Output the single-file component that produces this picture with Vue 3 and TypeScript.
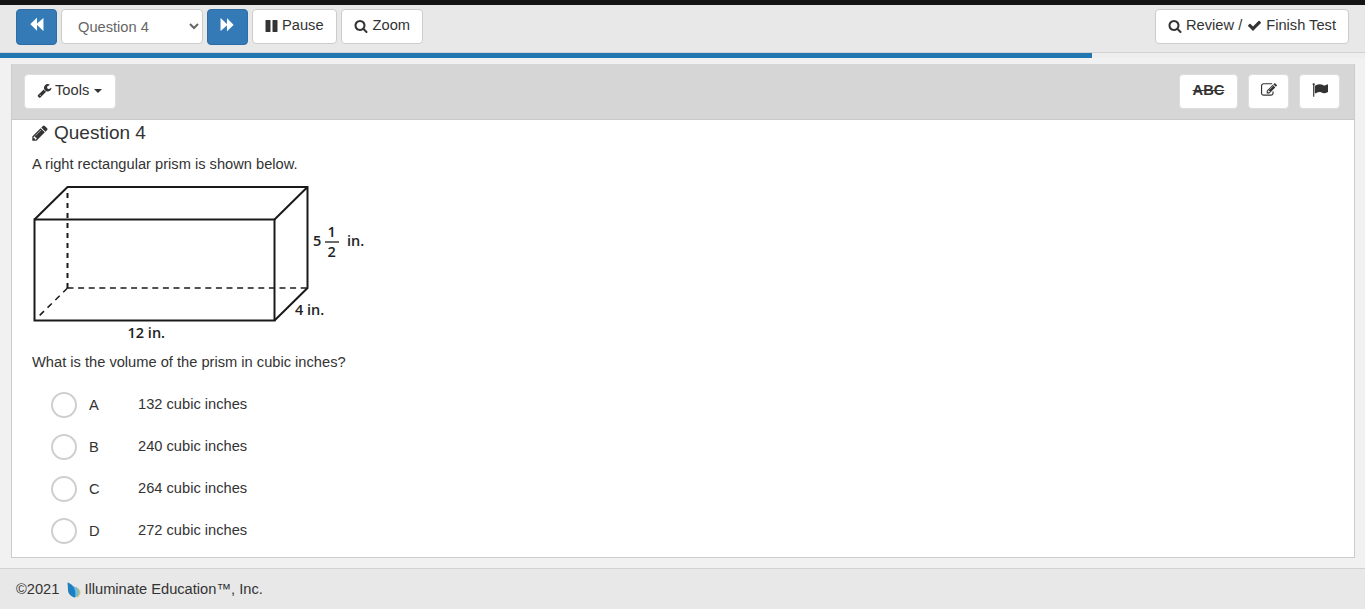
<script setup lang="ts">
const choices = [
  { letter: 'A', text: '132 cubic inches' },
  { letter: 'B', text: '240 cubic inches' },
  { letter: 'C', text: '264 cubic inches' },
  { letter: 'D', text: '272 cubic inches' },
]
const icons: Record<string, string> = {
  search: 'M1216 832q0-185-131.500-316.500t-316.500-131.500-316.500 131.500-131.500 316.500 131.500 316.500 316.500 131.500 316.500-131.500 131.500-316.500zm512 832q0 52-37.500 90t-90.500 38q-54 0-90-38l-343-342q-179 124-399 124-143 0-273.500-55.500t-225-150-150-225-55.500-273.500 55.500-273.500 150-225 225-150 273.500-55.500 273.500 55.500 225 150 150 225 55.500 273.500q0 220-124 399l343 343q37 37 37 90z',
  check: 'M1671 566q0 40-28 68l-724 724-136 136q-28 28-68 28t-68-28l-136-136-362-362q-28-28-28-68t28-68l136-136q28-28 68-28t68 28l294 295 656-657q28-28 68-28t68 28l136 136q28 28 28 68z',
  pause: 'M1664 192v1408q0 26-19 45t-45 19h-512q-26 0-45-19t-19-45v-1408q0-26 19-45t45-19h512q26 0 45 19t19 45zm-896 0v1408q0 26-19 45t-45 19h-512q-26 0-45-19t-19-45v-1408q0-26 19-45t45-19h512q26 0 45 19t19 45z',
  backward: 'M1683 141q19-19 32-13t13 32v1472q0 26-13 32t-32-13l-710-710q-9-9-13-19v678q0 26-13 32t-32-13l-710-710q-19-19-19-45t19-45l710-710q19-19 32-13t13 32v678q4-10 13-19z',
  forward: 'M109 1651q-19 19-32 13t-13-32v-1472q0-26 13-32t32 13l710 710q9 9 13 19v-678q0-26 13-32t32 13l710 710q19 19 19 45t-19 45l-710 710q-19 19-32 13t-13-32v-678q-4 10-13 19z',
  pencil: 'M491 1536l91-91-235-235-91 91v107h128v128h107zm523-928q0-22-22-22-10 0-17 7l-542 542q-7 7-7 17 0 22 22 22 10 0 17-7l542-542q7-7 7-17zm-54-192l416 416-832 832h-416v-416zm683 96q0 53-37 90l-166 166-416-416 166-165q36-38 90-38 53 0 91 38l235 234q37 39 37 91z',
  wrench: 'M448 1472q0-26-19-45t-45-19-45 19-19 45 19 45 45 19 45-19 19-45zm644-420l-682 682q-37 37-90 37-52 0-91-37l-106-108q-38-36-38-90 0-53 38-91l681-681q39 98 114.500 173.500t173.500 114.500zm634-435q0 39-23 106-47 134-164.500 217.500t-258.500 83.500q-185 0-316.500-131.500t-131.500-316.500 131.500-316.500 316.500-131.500q58 0 121.500 16.500t107.500 46.500q16 11 16 28t-16 28l-293 169v224l193 107q5-3 79-48.500t135.500-81 70.500-35.500q15 0 23.500 10t8.500 25z',
  edit: 'M888 1184l116-116-152-152-116 116v56h96v96h56zm440-720q-16-16-33 1l-350 350q-17 17-1 33t33-1l350-350q17-17 1-33zm80 594v190q0 119-84.500 203.500t-203.500 84.500h-832q-119 0-203.500-84.500t-84.500-203.500v-832q0-119 84.500-203.500t203.500-84.500h832q63 0 117 25 15 7 18 23 3 17-9 29l-49 49q-14 14-32 8-23-6-45-6h-832q-66 0-113 47t-47 113v832q0 66 47 113t113 47h832q66 0 113-47t47-113v-126q0-13 9-22l64-64q15-15 35-7t20 29zm-96-738l288 288-672 672h-288v-288zm444 132l-92 92-288-288 92-92q28-28 68-28t68 28l152 152q28 28 28 68t-28 68z',
  flag: 'M320 256q0 72-64 110v1266q0 13-9.500 22.500t-22.500 9.500h-64q-13 0-22.500-9.500t-9.500-22.500v-1266q-64-38-64-110 0-53 37.500-90.500t90.500-37.500 90.500 37.500 37.500 90.500zm1472 64v763q0 25-12.500 38.500t-39.500 27.500q-215 116-369 116-61 0-123.500-22t-108.500-48-115.500-48-142.500-22q-192 0-464 146-17 9-33 9-26 0-45-19t-19-45v-742q0-32 31-55 21-14 79-43 236-120 421-120 107 0 200 29t219 88q38 19 88 19 54 0 117.500-21t110-47 88-47 54.500-21q26 0 45 19t19 45z',
}
</script>

<template>
  <div class="page">
    <div class="blackbar"></div>
    <header class="topbar">
      <div class="left">
        <button class="btn primary nav" aria-label="Previous">
          <svg width="15" height="15" viewBox="0 0 1792 1792"><path :d="icons.backward"/></svg>
        </button>
        <select class="select">
          <option>Question 4</option>
        </select>
        <button class="btn primary nav" aria-label="Next">
          <svg width="15" height="15" viewBox="0 0 1792 1792"><path :d="icons.forward"/></svg>
        </button>
        <button class="btn">
          <svg class="ic" width="13" height="14" viewBox="64 0 1664 1792"><path :d="icons.pause"/></svg>
          <span>Pause</span>
        </button>
        <button class="btn zoom">
          <svg class="ic" width="14" height="14" viewBox="0 0 1792 1792"><path :d="icons.search"/></svg>
          <span>Zoom</span>
        </button>
      </div>
      <button class="btn">
        <svg class="ic" width="14" height="14" viewBox="0 0 1792 1792"><path :d="icons.search"/></svg>
        <span>Review /</span>
        <svg class="ic check" width="15" height="15" viewBox="0 0 1792 1792"><path :d="icons.check"/></svg>
        <span>Finish Test</span>
      </button>
    </header>
    <div class="progress"><div class="progress-fill"></div></div>

    <main class="panel">
      <div class="toolbar">
        <button class="btn tool tools">
          <svg class="ic" width="15" height="15" viewBox="0 0 1792 1792"><path :d="icons.wrench"/></svg>
          <span>Tools</span>
          <span class="caret"></span>
        </button>
        <div class="tool-right">
          <button class="btn tool abc"><s>ABC</s></button>
          <button class="btn tool icon-only" aria-label="Notes">
            <svg width="16" height="16" viewBox="0 0 1792 1792"><path :d="icons.edit"/></svg>
          </button>
          <button class="btn tool icon-only" aria-label="Flag">
            <svg width="16" height="16" viewBox="0 0 1792 1792"><path :d="icons.flag"/></svg>
          </button>
        </div>
      </div>

      <section class="content">
        <h4 class="title">
          <svg class="pencil" width="18" height="18" viewBox="0 0 1792 1792"><path :d="icons.pencil"/></svg>
          <span>Question 4</span>
        </h4>
        <p class="stem">A right rectangular prism is shown below.</p>

        <svg class="figure" width="344" height="160" viewBox="0 0 344 160" aria-label="Right rectangular prism">
          <g fill="none" stroke="#1a1a1a" stroke-width="2">
            <rect x="2.500" y="34.500" width="240" height="101"/>
            <path d="M2.500 34.500L35.500 2H275.500V103L242.500 135.500M242.500 34.500L275.500 2"/>
          </g>
          <g fill="none" stroke="#1a1a1a" stroke-width="1.500">
            <path d="M35.500 8V103" stroke-width="2" stroke-dasharray="5 5"/>
            <path d="M35.500 103H275" stroke-dasharray="6 4.600"/>
            <path d="M35.500 103L6 132" stroke-dasharray="6 5"/>
          </g>
          <g class="fig-text">
            <text x="281" y="61">5</text>
            <text x="295.500" y="51.500">1</text>
            <path d="M293 57h14" stroke="#1a1a1a" stroke-width="1.300"/>
            <text x="295.500" y="71.500">2</text>
            <text x="315" y="61">in.</text>
            <text x="263" y="130">4 in.</text>
            <text x="95.500" y="153">12 in.</text>
          </g>
        </svg>

        <p class="stem prompt">What is the volume of the prism in cubic inches?</p>

        <ul class="choices">
          <li v-for="c in choices" :key="c.letter" class="choice">
            <span class="radio"></span>
            <span class="letter">{{ c.letter }}</span>
            <span class="answer">{{ c.text }}</span>
          </li>
        </ul>
      </section>
    </main>

    <footer class="footer">
      <span>©2021</span>
      <svg class="logo" width="14" height="16" viewBox="0 0 14 16"><path d="M9 5c2 .5 4 2.500 4.500 5-.3 3-1.500 4.500-3.500 5.500z" fill="#e2bb58"/><path d="M6 4c2 .5 5 2 6 5 .5 2.500-1 5.500-4 6.500z" fill="#6fbde6"/><path d="M.5.500c3 .7 6.500 3.500 7.500 8 .5 2.500.5 5 0 7-3.500-.5-6.500-3-7-7z" fill="#1f7fc0"/></svg>
      <span>Illuminate Education™, Inc.</span>
    </footer>
  </div>
</template>

<style>
html, body { margin: 0; background: #f1f1f1; }
</style>

<style scoped>
.page {
  width: 1365px;
  height: 609px;
  overflow: hidden;
  display: flex;
  flex-direction: column;
  background: #f1f1f1;
  font-family: "Liberation Sans", Arial, sans-serif;
  font-size: 14.670px;
  color: #333;
}
.blackbar { height: 5px; background: #141414; flex: none; }
.topbar {
  height: 48px;
  flex: none;
  box-sizing: border-box;
  display: flex;
  justify-content: space-between;
  align-items: flex-start;
  padding: 4px 16px 0 16px;
  background: #e8e8e8;
  border-bottom: 1px solid #d2d2d2;
}
.left { display: flex; gap: 4px; }
.btn {
  box-sizing: border-box;
  height: 35px;
  padding: 0 12px 2px;
  display: inline-flex;
  align-items: center;
  gap: 4px;
  background: #fff;
  border: 1px solid #ccc;
  border-radius: 4px;
  color: #333;
  font: inherit;
  line-height: 1;
  white-space: nowrap;
}
.zoom { gap: 5px; }
.check { margin-left: 1px; }
.ic { fill: #333; flex: none; }
.primary { background: #337ab7; border-color: #2e6da4; }
.nav { width: 41px; height: 36px; justify-content: center; padding: 0 0 5px; }
.nav svg { fill: #fff; }
.select {
  box-sizing: border-box;
  width: 142px;
  height: 35px;
  padding: 0 12px;
  background: #fff;
  border: 1px solid #ccc;
  border-radius: 4px;
  color: #666;
  font: inherit;
}
.progress { height: 5px; flex: none; background: #eeeeee; }
.progress-fill { width: 1092px; height: 100%; background: #1f76b1; }
.panel {
  flex: none;
  box-sizing: border-box;
  height: 494px;
  margin: 6px 10px 0 11px;
  border: 1px solid #ccc;
  border-top: 0;
  background: #fff;
}
.toolbar {
  box-sizing: border-box;
  height: 56px;
  padding: 10px 14px 0 12px;
  display: flex;
  justify-content: space-between;
  align-items: flex-start;
  background: #d6d6d6;
  border-bottom: 1px solid #c9c9c9;
}
.tool { border-color: #dedede; padding-bottom: 2px; }
.tools { gap: 3px; padding-right: 13px; }
.tool-right { display: flex; gap: 10px; }
.abc { width: 59px; justify-content: center; padding: 0 0 2px; font-weight: 700; }
.icon-only { width: 41px; justify-content: center; padding: 0 0 3px; }
.icon-only svg { fill: #333; }
.caret {
  width: 0;
  height: 0;
  margin-left: 2px;
  border-top: 4px solid #333;
  border-left: 4px solid transparent;
  border-right: 4px solid transparent;
}
.content { padding: 0 20px; }
.title {
  margin: 0;
  height: 26px;
  display: flex;
  align-items: center;
  gap: 5px;
  font-size: 19px;
  font-weight: 400;
  line-height: 26px;
}
.pencil { fill: #333; margin-left: -1px; }
.stem { margin: 0; line-height: 20px; }
.title + .stem { margin-top: 8px; }
.figure { display: block; margin-top: 11px; }
.fig-text text {
  font-family: "Open Sans", sans-serif;
  font-size: 14.500px;
  font-weight: 600;
  fill: #222;
}
.prompt { margin-top: 7px; }
.choices { list-style: none; margin: 12px 0 0; padding: 0 0 0 19px; }
.choice { height: 42px; display: flex; align-items: center; }
.radio {
  box-sizing: border-box;
  width: 26px;
  height: 26px;
  flex: none;
  border: 2px solid #cfcfcf;
  border-radius: 50%;
  background: #fff;
}
.letter { width: 49px; flex: none; margin-left: 12px; }
.answer { position: relative; top: -1px; }
.footer {
  flex: none;
  margin-top: 10px;
  height: 41px;
  box-sizing: border-box;
  display: flex;
  align-items: center;
  padding-left: 16px;
  background: #e8e8e8;
  border-top: 1px solid #d2d2d2;
}
.logo { margin: 2px 3px 0 8px; }
</style>
